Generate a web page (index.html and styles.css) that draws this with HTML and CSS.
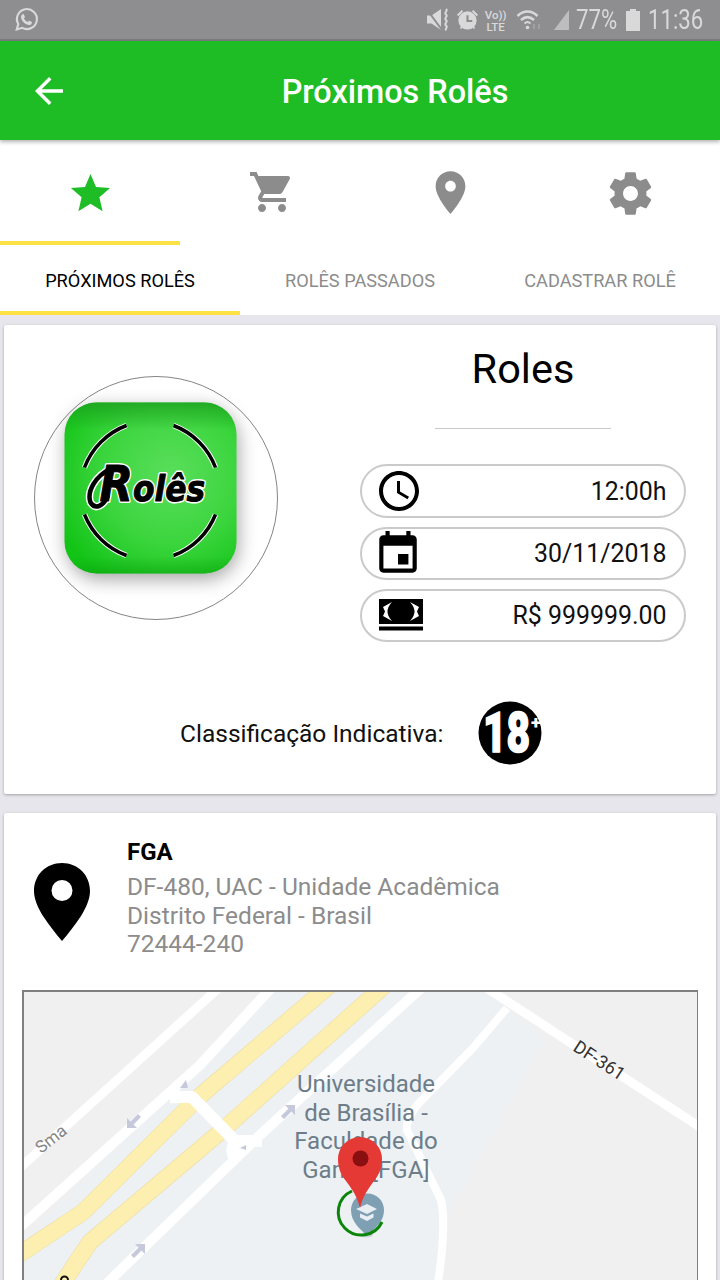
FILE: index.html
```html
<!DOCTYPE html>
<html lang="pt-BR">
<head>
<meta charset="utf-8">
<title>Próximos Rolês</title>
<link rel="stylesheet" href="styles.css">
</head>
<body>
<div class="page">
  <div class="status">
    <svg class="st-whats" viewBox="0 0 24 24"><path class="st-line" d="M2.600 21.600l1.500-5.200A9.600 9.600 0 1 1 7.800 20z"/><path class="st-fill" d="M8.600 6.800c.4 0 .7 0 .9.5l.9 2.100c.1.3 0 .6-.2.8l-.7.9c.8 1.500 2 2.600 3.600 3.400l.9-1.100c.2-.3.5-.3.8-.2l2 1c.4.2.5.5.4.9-.2 1.400-1.300 2.200-2.700 2.200-3.700-.4-7.200-3.700-7.700-7.300-.2-1.500.6-2.800 1.800-3.200z"/></svg>
    <span class="st-space"></span>
    <svg class="st-mute" viewBox="0 0 24 24"><path class="st-fill" d="M0 7.500h4.500L14 1v21L4.500 15.500H0z"/><path class="st-bar" d="M1 3L15 22"/><path class="st-wave" d="M19 1c2.500 2-2.500 3.500 0 5.500s-2.500 3.500 0 5.500-2.500 3.500 0 5.500-1.500 3 0 5"/></svg>
    <svg class="st-alarm" viewBox="0 0 24 24"><circle class="st-fill" cx="12" cy="13" r="9.500"/><path class="st-clock" d="M12 7.500V13.500H17"/><path class="st-fill" d="M1 7l5-5 1.500 1.500-5 5zM23 7l-5-5-1.500 1.500 5 5zM4 21l2-3 1.500 1-2 3zM20 21l-2-3-1.500 1 2 3z"/></svg>
    <div class="st-volte"><span>Vo))</span><span>LTE</span></div>
    <svg class="st-wifi" viewBox="0 0 26 22"><path class="st-wifi-arc" d="M1.500 7C7.500 1 15.500 1 21.500 7M5 11c4.500-4 8.500-4 13 0"/><path class="st-line" d="M8.500 14.500c2.500-2 3.500-2 6 0"/><circle class="st-fill" cx="11.500" cy="18.500" r="1.800"/><path class="st-small" d="M18 15v5M23 20v-5"/></svg>
    <svg class="st-signal" viewBox="0 0 15 20"><path class="st-dim" d="M15 0V20H0z"/></svg>
    <span class="st-pct">77%</span>
    <svg class="st-batt" viewBox="0 0 16 22"><path class="st-fill" d="M5 0h6v2h4v20H1V2h4z"/></svg>
    <span class="st-time">11:36</span>
  </div>

  <header class="appbar">
    <svg class="back" viewBox="0 0 24 24"><path d="M20 11H7.830l5.590-5.590L12 4l-8 8 8 8 1.410-1.410L7.830 13H20v-2z"/></svg>
    <h1 class="appbar-title">Próximos Rolês</h1>
  </header>

  <nav class="icon-tabs">
    <div class="icon-tab is-active"><svg class="ic ic-star" viewBox="0 0 24 24"><path d="M12 17.270L18.180 21l-1.640-7.030L22 9.240l-7.190-.61L12 2 9.190 8.630 2 9.240l5.460 4.730L5.820 21z"/></svg></div>
    <div class="icon-tab"><svg class="ic ic-cart" viewBox="0 0 24 24"><path d="M7 18c-1.100 0-1.990.9-1.990 2S5.900 22 7 22s2-.9 2-2-.9-2-2-2zM1 2v2h2l3.600 7.590-1.350 2.450c-.16.28-.25.61-.25.96 0 1.100.9 2 2 2h12v-2H7.420c-.14 0-.25-.11-.25-.25l.03-.12.9-1.630h7.450c.75 0 1.410-.41 1.750-1.030l3.580-6.490c.08-.14.12-.31.12-.48 0-.55-.45-1-1-1H5.210l-.94-2H1zm16 16c-1.100 0-1.990.9-1.990 2s.89 2 1.990 2 2-.9 2-2-.9-2-2-2z"/></svg></div>
    <div class="icon-tab"><svg class="ic ic-place" viewBox="0 0 24 24"><path d="M12 2C8.130 2 5 5.130 5 9c0 5.250 7 13 7 13s7-7.750 7-13c0-3.870-3.130-7-7-7zm0 9.500c-1.380 0-2.500-1.120-2.500-2.500s1.120-2.500 2.500-2.500 2.500 1.120 2.500 2.500-1.120 2.500-2.500 2.500z"/></svg></div>
    <div class="icon-tab"><svg class="ic ic-gear" viewBox="0 0 24 24"><path d="M19.430 12.980c.04-.32.07-.64.07-.98s-.03-.66-.07-.98l2.110-1.650c.19-.15.24-.42.12-.64l-2-3.460c-.12-.22-.39-.3-.61-.22l-2.490 1c-.52-.4-1.080-.73-1.690-.98l-.38-2.650C14.460 2.180 14.250 2 14 2h-4c-.25 0-.46.18-.49.42l-.38 2.650c-.61.25-1.170.59-1.690.98l-2.490-1c-.23-.09-.49 0-.61.22l-2 3.460c-.13.22-.07.49.12.64l2.110 1.650c-.04.32-.07.65-.07.98s.03.66.07.98l-2.110 1.650c-.19.15-.24.42-.12.64l2 3.460c.12.22.39.3.61.22l2.490-1c.52.4 1.080.73 1.690.98l.38 2.650c.03.24.24.42.49.42h4c.25 0 .46-.18.49-.42l.38-2.650c.61-.25 1.170-.59 1.690-.98l2.490 1c.23.09.49 0 .61-.22l2-3.460c.12-.22.07-.49-.12-.64l-2.110-1.650zM12 15.500c-1.930 0-3.500-1.570-3.500-3.500s1.570-3.500 3.500-3.500 3.500 1.570 3.500 3.500-1.570 3.500-3.500 3.500z"/></svg></div>
  </nav>

  <nav class="text-tabs">
    <div class="text-tab is-active">PRÓXIMOS ROLÊS</div>
    <div class="text-tab">ROLÊS PASSADOS</div>
    <div class="text-tab">CADASTRAR ROLÊ</div>
  </nav>

  <main class="content">
    <section class="card card-event">
      <div class="event-top">
        <div class="logo-circle">
          <svg class="logo" viewBox="0 0 241 241">
            <defs>
              <radialGradient id="logoGreen" cx="0.62" cy="0.42" r="0.72">
                <stop offset="0" stop-color="#5ade5c"/>
                <stop offset="0.55" stop-color="#3cd53e"/>
                <stop offset="1" stop-color="#12c416"/>
              </radialGradient>
              <linearGradient id="logoTop" x1="0" y1="0" x2="0" y2="1">
                <stop offset="0" stop-color="#1d9d20" stop-opacity="0.75"/>
                <stop offset="0.16" stop-color="#1d9d20" stop-opacity="0"/>
                <stop offset="0.9" stop-color="#0a9c0d" stop-opacity="0"/>
                <stop offset="1" stop-color="#0a9c0d" stop-opacity="0.45"/>
              </linearGradient>
              <filter id="logoShadow" x="-30%" y="-30%" width="160%" height="160%"><feGaussianBlur stdDeviation="9"/></filter>
            </defs>
            <g transform="translate(.5 .5)">
              <rect class="logo-shadow" x="31" y="30" width="172" height="172" rx="34" filter="url(#logoShadow)"/>
              <rect x="29" y="25" width="172" height="171" rx="32" fill="url(#logoGreen)"/>
              <rect x="29" y="25" width="172" height="171" rx="32" fill="url(#logoTop)"/>
              <path class="logo-arc-w" d="M91 48A72 72 0 0 0 49 90M138 48A72 72 0 0 1 180 90M49 137A72 72 0 0 0 91 178M180 137A72 72 0 0 1 138 178"/>
              <path class="logo-arc" d="M91 48A72 72 0 0 0 49 90M138 48A72 72 0 0 1 180 90M49 137A72 72 0 0 0 91 178M180 137A72 72 0 0 1 138 178"/>
              <path class="swash-w" d="M76 91C60 98 51 114 55 125C60 133 68 128 72 119"/>
              <text class="logo-text logo-text-w" transform="translate(64 123) scale(.87 1)"><tspan class="logo-r">R</tspan>olês</text>
              <path class="swash" d="M76 91C60 98 51 114 55 125C60 133 68 128 72 119"/>
              <text class="logo-text" transform="translate(64 123) scale(.87 1)"><tspan class="logo-r">R</tspan>olês</text>
            </g>
          </svg>
        </div>
        <div class="event-info">
          <h2 class="event-name">Roles</h2>
          <div class="event-rule"></div>
          <div class="pills">
            <div class="pill pill-first"><svg class="pill-ic" viewBox="0 0 24 24"><path d="M11.990 2C6.470 2 2 6.480 2 12s4.470 10 9.990 10C17.520 22 22 17.520 22 12S17.520 2 11.990 2zM12 20c-4.420 0-8-3.580-8-8s3.580-8 8-8 8 3.580 8 8-3.580 8-8 8zm.5-13H11v6l5.250 3.150.75-1.230-4.500-2.670z"/></svg><span>12:00h</span></div>
            <div class="pill"><svg class="pill-ic pill-cal" viewBox="0 0 24 24"><path d="M17 12h-5v5h5v-5zM16 1v2H8V1H6v2H5c-1.110 0-1.990.9-1.990 2L3 19c0 1.100.89 2 2 2h14c1.100 0 2-.9 2-2V5c0-1.100-.9-2-2-2h-1V1h-2zm3 18H5V8h14v11z"/></svg><span>30/11/2018</span></div>
            <div class="pill"><svg class="pill-ic pill-money" viewBox="0 0 44 32"><path d="M0 0h44v25H0zM0 27.500h44v4H0z"/><path class="money-w" d="M4 8L13 3C9.500 7 8.500 10 8.500 12.500S9.500 18 13 22L4 17l2-4.500zM40 8L31 3c3.500 4 4.500 7 4.500 9.500S34.500 18 31 22l9-5-2-4.500z"/></svg><span>R$ 999999.00</span></div>
          </div>
        </div>
      </div>
      <div class="rating">
        <span class="rating-label">Classificação Indicativa:</span>
        <svg class="rating-badge" viewBox="0 0 64 64">
          <circle cx="32" cy="32" r="31.500"/>
          <text class="rating-num" transform="translate(5 51) scale(.74 1)">18</text>
          <text class="rating-plus" x="53" y="28">+</text>
        </svg>
      </div>
    </section>

    <section class="card card-place">
      <div class="place-head">
        <svg class="place-pin" viewBox="0 0 58 78"><path d="M29 0C13 0 1 12 1 28c0 8 4 17 9 25 6 9 13 18 19 25 6-7 13-16 19-25 5-8 9-17 9-25C57 12 45 0 29 0zm0 38a10.500 10.500 0 1 1 0-21 10.500 10.500 0 0 1 0 21z"/></svg>
        <div class="place-text">
          <div class="place-name">FGA</div>
          <div class="place-line">DF-480, UAC - Unidade Acadêmica</div>
          <div class="place-line">Distrito Federal - Brasil</div>
          <div class="place-line">72444-240</div>
        </div>
      </div>
      <div class="map">
        <svg class="map-svg" viewBox="24 992 674 300">
          <rect class="m-ground" x="0" y="980" width="720" height="320"/>
          <path class="m-blue" d="M24 1290V1240L270 992H490L545 1040L450 1210L437 1290z"/>
          <g class="m-road">
            <path class="w9" d="M0 1186L222 985"/>
            <path class="w10" d="M10 1236L200 1065L274 985"/>
            <path class="w10" d="M100 1290L260 1135L430 980"/>
            <path class="w9" d="M482 985L720 1140"/>
            <path class="w8" d="M507 1008L473 1048L420 1102Q405 1118 407 1130L441 1200Q447 1225 437 1290"/>
          </g>
          <g class="m-yellow-edge">
            <path d="M14 1258L83 1212L200 1096L330 985"/>
            <path d="M58 1290L90 1242L225 1128L385 985"/>
          </g>
          <g class="m-yellow">
            <path d="M14 1258L83 1212L200 1096L330 985"/>
            <path d="M58 1290L90 1242L225 1128L385 985"/>
          </g>
          <path class="m-link" d="M170 1097H192L235 1141H262M236 1141Q229 1150 236 1160"/>
          <path class="m-arrow" transform="translate(135 1120) rotate(180)" d="M8-8V2L4.500-1.500-3 6-6 3 1.500-4.500-2-8z"/>
          <path class="m-arrow" transform="translate(137 1252)" d="M8-8V2L4.500-1.500-3 6-6 3 1.500-4.500-2-8z"/>
          <path class="m-arrow" transform="translate(287 1113)" d="M8-8V2L4.500-1.500-3 6-6 3 1.500-4.500-2-8z"/>
          <path class="m-arrow" d="M180 1088l6-8 2 8zM240 1148l6-3v5z"/>
          <path class="m-black" d="M61 1280a3.500 3.500 0 0 1 7 0"/>
          <text class="m-sma" transform="translate(41 1154) rotate(-38)">Sma</text>
          <text class="m-df" transform="translate(572 1050) rotate(33)">DF-361</text>
          <text class="m-label" x="366" y="1092">Universidade</text>
          <text class="m-label" x="366" y="1121">de Brasília -</text>
          <text class="m-label" x="366" y="1149">Faculdade do</text>
          <text class="m-label" x="366" y="1178">Gama [FGA]</text>
          <ellipse class="m-shadow" cx="367" cy="1235" rx="6" ry="2.500"/>
          <path class="m-gmark" d="M367 1236c-6-7-16-13-16-26a16 16 0 0 1 33 0c0 13-11 19-17 26z"/>
          <path class="m-cap" d="M367 1204l-11 5 11 5 10-5zM360 1213.500v4l7 3.500 6.500-3.500v-4l-6.500 3z"/>
          <path class="m-green" d="M352 1191A23 23 0 1 0 382 1222"/>
          <path class="m-pin" d="M360 1208c-3-12-8-19-14-27-5-6-8-13-8-22a22 22 0 0 1 44 0c0 9-3 16-8 22-6 8-11 15-14 27z"/>
          <circle class="m-pin-dot" cx="360.500" cy="1158.500" r="8"/>
        </svg>
      </div>
    </section>
  </main>
</div>
</body>
</html>
```

FILE: styles.css
```css
* { box-sizing: border-box; }
html, body { margin: 0; padding: 0; }
body { background: #e6e6ec; font-family: Roboto, "Liberation Sans", sans-serif; }
.page { width: 720px; height: 1280px; overflow: hidden; background: #e6e6ec; }

.status { height: 41px; background: #8e8e90; border-bottom: 2px solid #7c7c7e; display: flex; align-items: center; padding: 0 17px 0 14px; color: #d9d9d9; }
.status svg { display: block; flex: none; }
.st-fill { fill: #d9d9d9; }
.st-dim { fill: #bdbdbd; }
.st-line { fill: none; stroke: #d9d9d9; stroke-width: 2; }
.st-wifi-arc { fill: none; stroke: #d9d9d9; stroke-width: 2.500; }
.st-bar { fill: none; stroke: #8e8e90; stroke-width: 2; }
.st-wave { fill: none; stroke: #d9d9d9; stroke-width: 2; }
.st-clock { fill: none; stroke: #8e8e90; stroke-width: 2.200; }
.st-small { fill: none; stroke: #a8a8a8; stroke-width: 1.500; }
.st-whats { width: 25px; height: 25px; }
.st-space { flex: 1; }
.st-mute { width: 24px; height: 24px; }
.st-alarm { width: 23px; height: 23px; margin-left: 5px; }
.st-volte { width: 22px; margin-left: 6px; padding-top: 2px; display: flex; flex-direction: column; align-items: center; font-size: 11.500px; line-height: 12px; font-weight: 500; }
.st-wifi { width: 26px; height: 22px; margin-left: 9px; }
.st-signal { width: 15px; height: 20px; margin-left: 12px; }
.st-pct, .st-time { font-size: 27px; line-height: 32px; display: block; transform-origin: right center; transform: scaleX(.82); }
.st-pct { margin-left: -2px; }
.st-batt { width: 16px; height: 22px; margin-left: 8px; }
.st-time { margin-left: -5px; }

.appbar { height: 99px; background: #1fbd25; display: flex; align-items: center; position: relative; box-shadow: 0 2px 4px rgba(0,0,0,.3); }
.back { width: 42px; height: 42px; margin-left: 28px; fill: #fff; flex: none; }
.appbar-title { position: absolute; left: 35px; right: -35px; margin: 0; padding-top: 2px; text-align: center; color: #fff; font-size: 32.400px; font-weight: 500; line-height: 40px; }

.icon-tabs { height: 105px; background: #fff; display: grid; grid-template-columns: repeat(4, 180px); }
.icon-tab { display: flex; align-items: flex-start; justify-content: center; padding-top: 27px; border-bottom: 4px solid transparent; }
.icon-tab.is-active { border-bottom-color: #fde245; }
.ic { display: block; fill: #8c8c8c; }
.is-active .ic { fill: #1fbd25; }
.ic-star { width: 47px; height: 47px; margin-top: 3px; }
.ic-cart { width: 48px; height: 48px; margin: 1px 0 0 4px; }
.ic-place { width: 51px; height: 51px; }
.ic-gear { width: 51px; height: 51px; margin-top: 1px; }

.text-tabs { height: 70px; background: #fff; display: grid; grid-template-columns: repeat(3, 240px); }
.text-tab { display: flex; align-items: center; justify-content: center; padding-top: 4px; font-size: 18.200px; color: #8c8c8c; border-bottom: 4px solid transparent; }
.text-tab.is-active { color: #000; border-bottom-color: #fde245; }

.content { padding: 10px 4px 0; display: flex; flex-direction: column; gap: 19px; }
.card { background: #fff; border-radius: 2px; box-shadow: 0 1px 3px rgba(0,0,0,.3); }
.card-event { height: 469px; padding: 0 30px; }
.event-top { display: flex; height: 317px; }
.logo-circle { width: 244px; height: 244px; margin-top: 51px; border: 1.500px solid #858585; border-radius: 50%; flex: none; }
.logo { display: block; width: 241px; height: 241px; overflow: visible; }
.logo-shadow { fill: rgba(0,0,0,.35); }
.logo-arc, .logo-arc-w { fill: none; }
.logo-arc { stroke: #000; stroke-width: 3.500; }
.logo-arc-w { stroke: #fff; stroke-width: 5.500; }
.logo-text { font-family: "DejaVu Sans", sans-serif; font-style: italic; font-weight: 700; font-size: 36px; fill: #000; stroke: #000; stroke-width: 1px; stroke-linejoin: round; }
.logo-text-w { stroke: #fff; stroke-width: 4px; fill: #fff; }
.logo-r { font-size: 50px; }
.swash, .swash-w { fill: none; stroke-linecap: round; }
.swash { stroke: #000; stroke-width: 4.500px; }
.swash-w { stroke: #fff; stroke-width: 7.500px; }

.event-info { margin-left: 82px; width: 326px; display: flex; flex-direction: column; align-items: center; }
.event-name { margin: 20px 0 0; font-size: 41.500px; font-weight: 400; line-height: 48px; color: #000; }
.event-rule { width: 176px; height: 1px; background: #c8c8c8; margin-top: 35px; }
.pills { width: 326px; margin-top: 35px; display: flex; flex-direction: column; gap: 9px; }
.pill { height: 53px; border: 2px solid #cacaca; border-radius: 27px; display: flex; align-items: center; justify-content: space-between; padding: 0 17.500px 0 13px; font-size: 24.900px; color: #111; }
.pill-first { height: 54px; }
.pill-ic { display: block; width: 48px; height: 48px; fill: #000; flex: none; }
.pill-cal { width: 50px; height: 50px; margin-left: -2px; }
.pill-money { width: 44px; height: 32px; margin-left: 4px; margin-top: -2px; }
.money-w { fill: #fff; }

.rating { display: flex; align-items: center; height: 64px; margin-top: 59px; padding-left: 146px; }
.rating-label { font-size: 24.500px; color: #111; width: 298px; }
.rating-badge { display: block; width: 64px; height: 64px; overflow: visible; flex: none; }
.rating-num { font-family: Roboto, sans-serif; font-weight: 900; font-size: 55px; fill: #fff; stroke: #fff; stroke-width: 1.500px; }
.rating-plus { font-family: Roboto, sans-serif; font-weight: 900; font-size: 18px; fill: #fff; }

.card-place { padding: 0 18px; height: 600px; }
.place-head { display: flex; height: 177px; }
.place-pin { display: block; width: 58px; height: 78px; margin: 50px 0 0 11px; fill: #000; flex: none; }
.place-text { margin-left: 36px; padding-top: 24px; }
.place-name { font-size: 24px; font-weight: 700; line-height: 30px; margin-bottom: 6px; color: #000; }
.place-line { font-size: 24.500px; line-height: 28.500px; color: #8c8c8c; }
.map { height: 330px; border: 2px solid #808080; border-right-width: 1px; overflow: hidden; }
.map-svg { display: block; width: 674px; height: 300px; }

.m-ground { fill: #f0f0f0; }
.m-blue { fill: #edf1f4; }
.m-road path { fill: none; stroke: #fff; stroke-linejoin: round; }
.w8 { stroke-width: 8px; }
.w9 { stroke-width: 9px; }
.w10 { stroke-width: 10px; }
.m-link { fill: none; stroke: #fff; stroke-width: 12px; stroke-linejoin: round; }
.m-yellow-edge path { fill: none; stroke: #ecdc9e; stroke-width: 17px; stroke-linejoin: round; }
.m-yellow path { fill: none; stroke: #fdefaf; stroke-width: 16px; stroke-linejoin: round; }
.m-arrow { fill: #c6c9dc; }
.m-black { fill: none; stroke: #111; stroke-width: 2px; }
.m-sma { font-size: 17px; fill: #858585; }
.m-df { font-size: 18px; fill: #333; }
.m-label { font-size: 24px; fill: #6c7d89; text-anchor: middle; }
.m-shadow { fill: #cfd4d8; }
.m-gmark { fill: #7f9fb3; }
.m-cap { fill: #e9eef3; }
.m-green { fill: none; stroke: #0a850a; stroke-width: 3px; }
.m-pin { fill: #e53935; }
.m-pin-dot { fill: #8a0f10; }
```
